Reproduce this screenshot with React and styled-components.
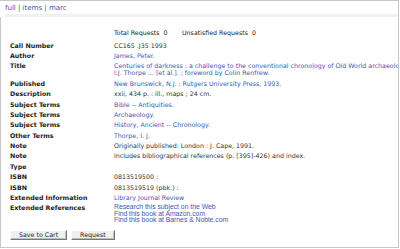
import React from 'react'
import styled, { createGlobalStyle } from 'styled-components'

const Global = createGlobalStyle`
  html, body {
    margin: 0;
    padding: 0;
    background: #fff;
  }
  body {
    font-family: "DejaVu Sans", Verdana, sans-serif;
    font-size: 6.3px;
    color: #333;
  }
`

const Frame = styled.div`
  width: 399px;
  height: 248px;
  box-sizing: border-box;
  border-top: 1px solid #c8c8c8;
  border-right: 1px solid #c8c8c8;
  overflow: hidden;
  display: flex;
  flex-direction: column;
`

const Nav = styled.div`
  height: 13px;
  padding: 3px 0 0 5px;
  box-sizing: border-box;
  font-size: 7px;
  line-height: 8px;
  color: #555;
`

const NavLink = styled.a`
  color: #3a58b4;
  text-decoration: none;
`

const Strip = styled.div`
  height: 3px;
  margin-left: 5px;
  background: #f1f1f1;
`

const Panel = styled.div`
  flex: 1;
  border-left: 1px solid #c8c8c8;
  border-bottom: 1px solid #c8c8c8;
  padding: 12px 0 0 9px;
  overflow: hidden;
`

const Counts = styled.div`
  display: flex;
  margin-left: 104px;
  line-height: 8px;
  white-space: nowrap;
  color: #222;
`

const Count = styled.span`
  width: ${p => p.$w || 'auto'};
  white-space: pre;
`

const Table = styled.div`
  margin-top: 3px;
  display: grid;
  grid-template-columns: 104px 1fr;
`

const Label = styled.div`
  font-weight: bold;
  color: #222;
  line-height: 7px;
  padding: 1.7px 0;
  white-space: nowrap;
`

const Value = styled.div`
  padding: 1.7px 0;
  white-space: nowrap;
  color: ${p => (p.$link ? '#3a58b4' : '#333')};
  font-family: ${p => (p.$arial ? '"Liberation Sans", Arial, sans-serif' : 'inherit')};
  font-size: ${p => (p.$arial ? '6.8px' : 'inherit')};
  line-height: ${p => (p.$arial ? '6.2px' : '7px')};
`

const Buttons = styled.div`
  display: flex;
  gap: 4px;
  margin-top: 5px;
`

const Button = styled.button`
  font-family: "DejaVu Sans", Verdana, sans-serif;
  font-size: 6.3px;
  color: #222;
  height: 10px;
  padding: 0 ${p => p.$pad || '7px'};
  line-height: 8px;
  background: #f0f0f0;
  border: 1px solid;
  border-color: #fff #777 #777 #fff;
  box-shadow: inset -1px -1px 0 #bbb;
`

const rows = [
  ['Call Number', 'CC165 .J35 1993'],
  ['Author', 'James, Peter.', true],
  ['Title', ['Centuries of darkness : a challenge to the conventional chronology of Old World archaeology /', 'I.J. Thorpe ... [et al.]. ; foreword by Colin Renfrew.'], true],
  ['Published', 'New Brunswick, N.J. : Rutgers University Press, 1993.', true],
  ['Description', 'xxii, 434 p. : ill., maps ; 24 cm.'],
  ['Subject Terms', 'Bible -- Antiquities.', true],
  ['Subject Terms', 'Archaeology.', true],
  ['Subject Terms', 'History, Ancient -- Chronology.', true],
  ['Other Terms', 'Thorpe, I. J.', true],
  ['Note', 'Originally published: London : J. Cape, 1991.'],
  ['Note', 'Includes bibliographical references (p. [395]-426) and index.'],
  ['Type', ''],
  ['ISBN', '0813519500 :'],
  ['ISBN', '0813519519 (pbk.) :'],
  ['Extended Information', 'Library Journal Review', true],
  ['Extended References', ['Research this subject on the Web', 'Find this book at Amazon.com', 'Find this book at Barnes & Noble.com'], true, true],
]

export default function App() {
  return (
    <>
      <Global />
      <Frame>
        <Nav>
          <NavLink>full</NavLink> | <NavLink>items</NavLink> | <NavLink>marc</NavLink>
        </Nav>
        <Strip />
        <Panel>
          <Counts>
            <Count $w="68px">Total Requests  0</Count>
            <Count>Unsatisfied Requests  0</Count>
          </Counts>
          <Table>
            {rows.map(([label, value, link, arial], i) => (
              <React.Fragment key={i}>
                <Label>{label}</Label>
                <Value $link={link} $arial={arial}>
                  {Array.isArray(value)
                    ? value.map((line, j) => <div key={j}>{line}</div>)
                    : value || '\u00a0'}
                </Value>
              </React.Fragment>
            ))}
          </Table>
          <Buttons>
            <Button $pad="8px">Save to Cart</Button>
            <Button $pad="8px">Request</Button>
          </Buttons>
        </Panel>
      </Frame>
    </>
  )
}
